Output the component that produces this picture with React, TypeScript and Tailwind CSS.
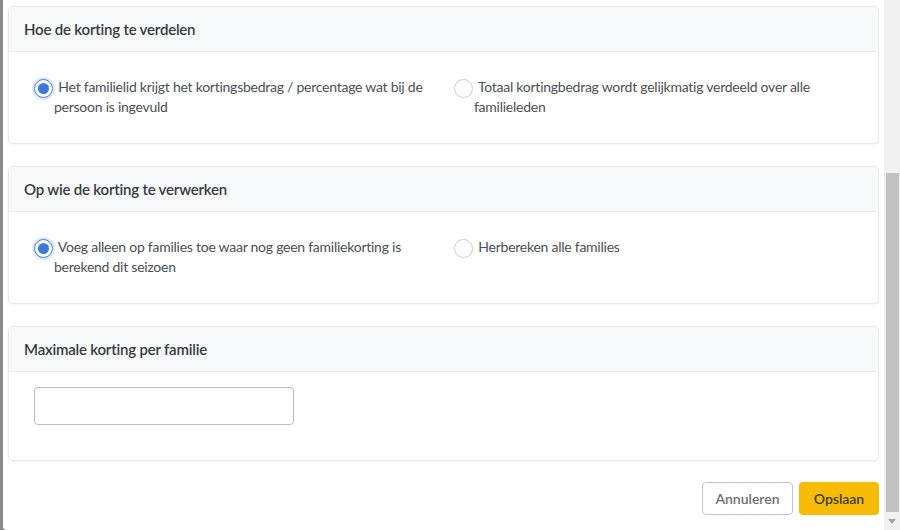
import { useState } from 'react';

type Option = { value: string; label: string };

function Radio({ checked }: { checked: boolean }) {
  return (
    <span
      className={
        'inline-flex items-center justify-center w-[19px] h-[19px] -ml-[20px] mr-[2px] -my-[4px] rounded-full border bg-white align-middle ' +
        (checked ? 'border-[#4a7fd9] shadow-[0_0_0_2px_rgba(74,127,217,0.18)]' : 'border-[#c8ccd4]')
      }
    >
      {checked && <span className="w-[11px] h-[11px] rounded-full bg-[#3f78d9]" />}
    </span>
  );
}

function RadioGroup({ options, initial }: { options: Option[]; initial: string }) {
  const [value, setValue] = useState(initial);
  return (
    <div className="grid grid-cols-[420px_1fr] px-[25px] pt-[25px] pb-[26px]">
      {options.map((o) => (
        <label
          key={o.value}
          onClick={() => setValue(o.value)}
          className="block pl-[20px] pr-[12px] text-[14px] tracking-[-0.25px] leading-[20px] text-[#4b4f56] cursor-pointer"
        >
          <Radio checked={value === o.value} /> {o.label}
        </label>
      ))}
    </div>
  );
}

function Card({ title, children }: { title: string; children: React.ReactNode }) {
  return (
    <section className="rounded-[5px] border border-[#e6e8ee] bg-white shadow-[0_1px_3px_rgba(0,0,0,0.05)] overflow-hidden">
      <header className="h-[45px] flex items-center px-[15px] bg-[#f8f9fb] border-b border-[#e6e8ee]">
        <h3 className="text-[15px] tracking-[-0.2px] font-semibold text-[#363a40]">{title}</h3>
      </header>
      {children}
    </section>
  );
}

export default function App() {
  return (
    <div className="w-[900px] h-[530px] flex overflow-hidden bg-[#8a8a8a]" style={{ fontFamily: 'Lato, "Noto Sans", sans-serif' }}>
      <main className="flex-1 ml-[3px] bg-white rounded-bl-[4px] pl-[5px] pr-[5px] pt-[6px] flex flex-col">
        <div className="flex flex-col gap-[22px]">
          <Card title="Hoe de korting te verdelen">
            <RadioGroup
              initial="lid"
              options={[
                { value: 'lid', label: 'Het familielid krijgt het kortingsbedrag / percentage wat bij de persoon is ingevuld' },
                { value: 'totaal', label: 'Totaal kortingbedrag wordt gelijkmatig verdeeld over alle familieleden' },
              ]}
            />
          </Card>
          <Card title="Op wie de korting te verwerken">
            <RadioGroup
              initial="nieuw"
              options={[
                { value: 'nieuw', label: 'Voeg alleen op families toe waar nog geen familiekorting is berekend dit seizoen' },
                { value: 'alle', label: 'Herbereken alle families' },
              ]}
            />
          </Card>
          <Card title="Maximale korting per familie">
            <div className="px-[25px] pt-[15px] pb-[35px]">
              <input
                type="text"
                className="w-[260px] h-[38px] rounded-[4px] border border-[#b9c0cc] px-3 text-[14px] outline-none"
              />
            </div>
          </Card>
        </div>
        <div className="flex justify-end gap-[6px] mt-[21px]">
          <button className="w-[91px] h-[33px] rounded-[4px] border border-[#bcc6d6] bg-white text-[14px] font-semibold text-[#6b6f76]">
            Annuleren
          </button>
          <button className="w-[80px] h-[33px] rounded-[4px] bg-[#f8bb06] text-[14px] font-semibold text-[#3d3a30]">
            Opslaan
          </button>
        </div>
      </main>
      <aside className="w-[16px] bg-[#f1f1f1] flex flex-col items-center">
        <div className="h-[173px]" />
        <div className="w-[13px] flex-1 bg-[#c1c1c1]" />
        <div className="h-[18px] flex items-center justify-center">
          <svg width="8" height="5" viewBox="0 0 8 5">
            <path d="M0 0h8L4 5z" fill="#a3a3a3" />
          </svg>
        </div>
      </aside>
    </div>
  );
}
